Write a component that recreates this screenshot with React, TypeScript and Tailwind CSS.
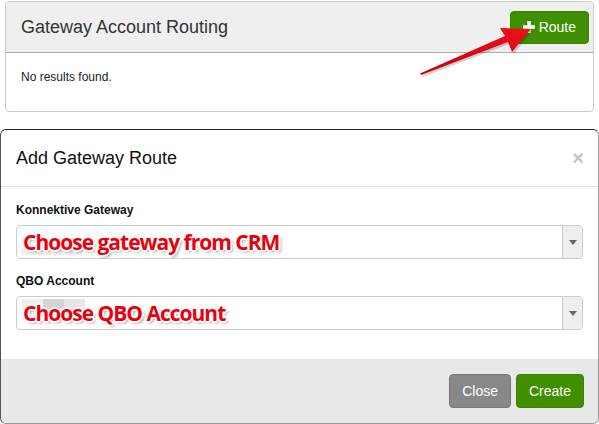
const font = { fontFamily: '"Liberation Sans", Arial, sans-serif' };

const Caret = () => (
  <div className="flex w-[20px] items-center justify-center border-l border-[#ccc] bg-[#eee] rounded-r">
    <svg width="8" height="5" viewBox="0 0 8 5">
      <path d="M0 0 H8 L4 5 Z" fill="#666" />
    </svg>
  </div>
);

const Select = ({ text, blur }: { text: string; blur: 'low' | 'high' }) => (
  <div className="relative flex h-[34px] rounded border border-[#ccc] bg-white">
    {blur === 'low' ? (
      <div className="absolute left-[5px] top-[21px] h-[8px] w-[60px] bg-[#efefef]" />
    ) : (
      <div className="absolute left-[5px] top-[2px] flex h-[10px] w-[63px]">
        <div className="w-[21px] bg-[#eee]" />
        <div className="w-[21px] bg-[#d4d4d4]" />
        <div className="w-[21px] bg-[#e6e6e6]" />
      </div>
    )}
    <div className="relative flex flex-1 items-center pl-[6px]">
      <span
        className="text-[21px] font-bold leading-none tracking-[-1px] text-[#e8000e] [text-shadow:-2px_0_#fff,2px_0_#fff,0_-2px_#fff,0_2px_#fff,-1px_-1px_#fff,1px_1px_#fff,-1px_1px_#fff,1px_-1px_#fff,2px_2px_3px_#888]"
        style={{ fontFamily: '"Open Sans", "Noto Sans", sans-serif' }}
      >
        {text}
      </span>
    </div>
    <Caret />
  </div>
);

export default function App() {
  return (
    <div className="relative h-[424px] w-[599px] overflow-hidden bg-white" style={font}>
      <div className="mx-[5px] mt-[1px] rounded border border-[#ccc] bg-white">
        <div className="flex h-[51px] items-center justify-between rounded-t border-b border-[#aaa] bg-[#efefef] pl-[15px] pr-[4px]">
          <h2 className="text-[18px] text-[#333]">Gateway Account Routing</h2>
          <button className="flex h-[33px] items-center gap-[4px] rounded bg-[#3f8f00] border border-[#3a8500] px-[12px] text-[14px] text-white">
            <svg width="12" height="12" viewBox="0 0 12 12">
              <path d="M4.25 0 H7.75 V4.25 H12 V7.75 H7.75 V12 H4.25 V7.75 H0 V4.25 H4.25 Z" fill="#fff" />
            </svg>
            Route
          </button>
        </div>
        <div className="px-[15px] pb-[25px] pt-[15px] text-[12px] text-[#222]">No results found.</div>
      </div>

      <div className="absolute left-0 top-[129px] h-[295px] w-[599px] rounded-md border border-[#999] border-l-[#555] border-t-[#222] bg-white">
        <div className="flex h-[57px] items-center justify-between border-b border-[#e5e5e5] pl-[15px] pr-[14px]">
          <h3 className="text-[18px] text-[#111]">Add Gateway Route</h3>
          <span className="text-[20px] font-bold leading-none text-[#c4c4c4]">×</span>
        </div>
        <div className="flex flex-col px-[15px] pr-[15px] pt-[15px]">
          <label className="mb-[7px] text-[12px] font-bold leading-4 text-[#111]">Konnektive Gateway</label>
          <Select text="Choose gateway from CRM" blur="low" />
          <label className="mb-[7px] mt-[14px] text-[12px] font-bold leading-4 text-[#111]">QBO Account</label>
          <Select text="Choose QBO Account" blur="high" />
        </div>
        <div className="mt-[29px] flex h-[64px] items-start justify-end gap-[5px] rounded-b-md bg-[#e8e8e8] pr-[14px] pt-[15px]">
          <button className="h-[34px] rounded border border-[#777] bg-[#888] px-[12px] text-[14px] text-white">Close</button>
          <button className="h-[34px] rounded border border-[#3a8500] bg-[#3f8f00] px-[12px] text-[14px] text-white">Create</button>
        </div>
      </div>

      <svg className="absolute left-0 top-0" width="599" height="130" viewBox="0 0 599 130">
        <defs>
          <linearGradient id="ar" x1="0" y1="1" x2="1" y2="0">
            <stop offset="0" stopColor="#c8000a" />
            <stop offset="1" stopColor="#f0101a" />
          </linearGradient>
        </defs>
        <polygon
          points="420,73.5 505,36 500,28 531,29 512,52 508,42 421,75"
          fill="#000"
          opacity="0.18"
          transform="translate(1.5,2)"
        />
        <polygon points="420,73.5 505,36 500,28 531,29 512,52 508,42 421,75" fill="url(#ar)" />
      </svg>
    </div>
  );
}
